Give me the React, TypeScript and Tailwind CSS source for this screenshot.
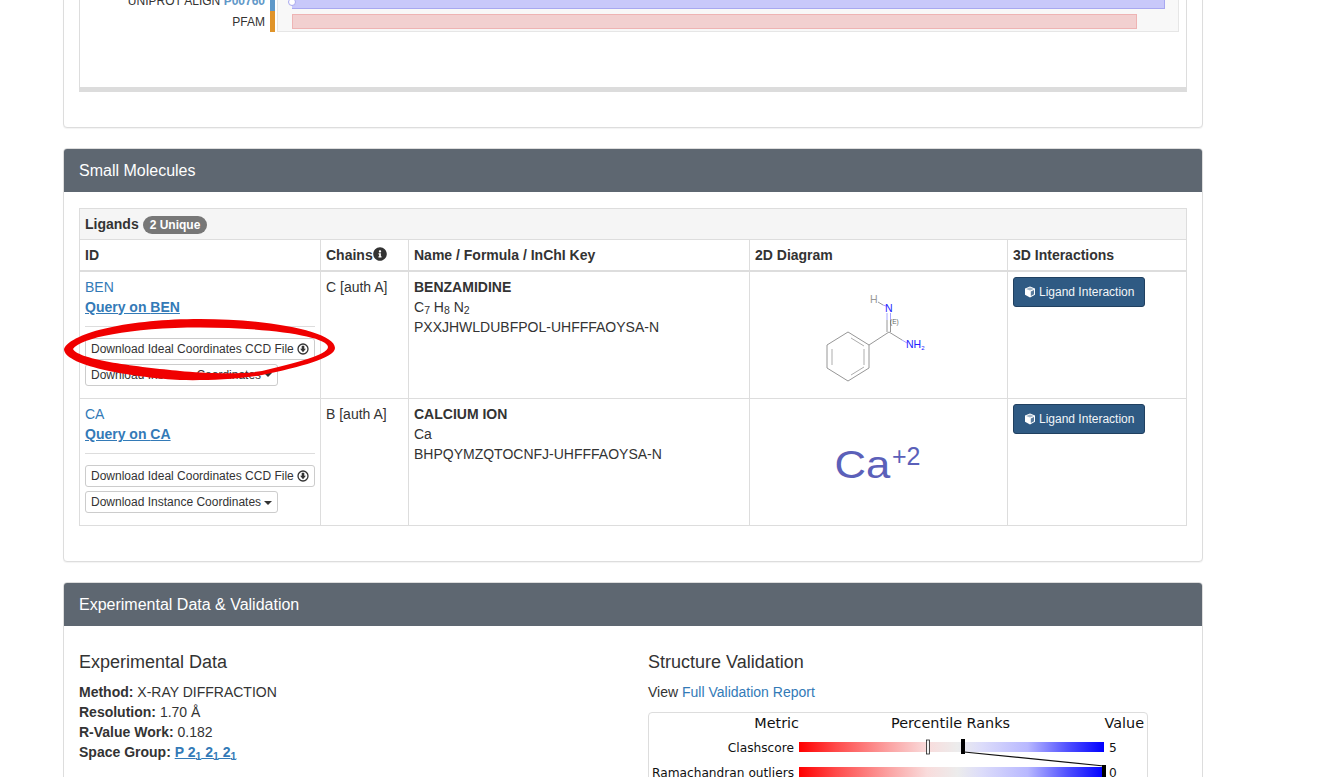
import { FaInfoCircle } from 'react-icons/fa';

const DownloadIcon = () => (
  <svg className="inline-block w-3 h-3 ml-[3px] align-[-2px]" viewBox="0 0 12 12">
    <circle cx="6" cy="6" r="5" fill="none" stroke="#333" strokeWidth="1.3" />
    <path d="M4.7 2.8h2.6v3h1.6L6 9.2 3.1 5.8h1.6z" fill="#333" />
  </svg>
);

const CubeIcon = () => (
  <svg className="inline-block w-3 h-3 mr-[3px] align-[-2px]" viewBox="0 0 12 12">
    <path d="M6 .5l5 1.9v6.4L6 11.5 1 8.8V2.4z" fill="#fff" />
    <path d="M2 3L6 4.6 10 3 6 1.5z" fill="#2f5a83" opacity="0.45" />
    <path d="M6.8 5.4L10 4v4.2L6.8 10z" fill="#2f5a83" opacity="0.8" />
  </svg>
);

const SmallButton = ({ children }: { children: React.ReactNode }) => (
  <button className="h-[22px] px-[5px] text-xs leading-[18px] text-[#333] bg-white border border-[#ccc] rounded-[3px] whitespace-nowrap">
    {children}
  </button>
);

const Caret = () => (
  <span className="inline-block ml-[3px] align-middle border-x-4 border-x-transparent border-t-4 border-t-[#333]" />
);

interface LigandRowProps {
  id: string;
  chains: string;
  name: string;
  formula: React.ReactNode;
  inchi: string;
  diagram: React.ReactNode;
}

function LigandRow({ id, chains, name, formula, inchi, diagram }: LigandRowProps) {
  return (
    <tr className="h-[128px] last:h-[127px]">
      <td className="border border-[#ddd] p-[5px] align-top">
        <a className="block text-[#337ab7]">{id}</a>
        <a className="block font-bold underline text-[#337ab7]">Query on {id}</a>
        <div className="border-t border-[#ddd] mt-[9px] mb-[11px]" />
        <div className="flex flex-col items-start gap-1">
          <SmallButton>
            Download Ideal Coordinates CCD File
            <DownloadIcon />
          </SmallButton>
          <SmallButton>
            Download Instance Coordinates
            <Caret />
          </SmallButton>
        </div>
      </td>
      <td className="border border-[#ddd] p-[5px] align-top">{chains}</td>
      <td className="border border-[#ddd] p-[5px] align-top">
        <div className="font-bold">{name}</div>
        <div>{formula}</div>
        <div>{inchi}</div>
      </td>
      <td className="border border-[#ddd] p-[5px] align-top">{diagram}</td>
      <td className="border border-[#ddd] p-[5px] align-top">
        <button className="h-[30px] px-[10px] text-xs text-[#f2f5f8] bg-[#2f5a83] border border-[#204060] rounded-[3px] whitespace-nowrap">
          <CubeIcon />
          Ligand Interaction
        </button>
      </td>
    </tr>
  );
}

const BenzamidineDiagram = () => (
  <svg className="block mx-auto mt-[13px]" width="120" height="100" viewBox="818 290 120 100">
    <g stroke="#8a8a8a" strokeWidth="0.9" fill="none">
      <path d="M847 332L868 345V368L847 381L826 368V345Z" />
      <path d="M850 338L863 346M863 349V365M850 375L863 367M831 349V365" strokeWidth="0.7" />
      <path d="M868 345L888 332" />
      <path d="M888 332L901 340" />
      <path d="M886 332V320M889.5 332V320" />
      <path d="M877 302L882 305" />
    </g>
    <g stroke="#9a9aff" strokeWidth="0.9" fill="none">
      <path d="M901 340L906 343" />
      <path d="M886 320V313M889.5 320V313" />
      <path d="M882 305L885 306" />
    </g>
    <g fontFamily="Liberation Sans, sans-serif">
      <text x="869" y="303" fontSize="10.5" fill="#999">H</text>
      <text x="884" y="312" fontSize="10.5" fill="#2222ff">N</text>
      <text x="905" y="348" fontSize="10.5" fill="#2222ff">NH<tspan fontSize="6" dy="2">2</tspan></text>
      <text x="889" y="323.5" fontSize="6.5" fill="#666">(E)</text>
    </g>
  </svg>
);

const CalciumDiagram = () => (
  <svg className="block mx-auto mt-[36px]" width="100" height="50" viewBox="829 440 100 50">
    <g fontFamily="Liberation Sans, sans-serif" fill="#5b60b9">
      <text transform="translate(834.5 477.5) scale(1.15 1)" fontSize="38">Ca</text>
      <text x="892" y="465" fontSize="25">+2</text>
    </g>
  </svg>
);

const ValidationChart = () => (
  <div className="w-[500px] h-[90px] border border-[#ddd] rounded">
    <svg className="block" width="498" height="88" viewBox="649 713 498 88">
      <defs>
        <linearGradient id="pct">
          <stop offset="0" stopColor="#ff0000" />
          <stop offset="0.12" stopColor="#ff4a4a" />
          <stop offset="0.3" stopColor="#fba5a5" />
          <stop offset="0.42" stopColor="#f9dcdc" />
          <stop offset="0.52" stopColor="#ececec" />
          <stop offset="0.6" stopColor="#dcdcfa" />
          <stop offset="0.75" stopColor="#b8b8ff" />
          <stop offset="0.88" stopColor="#5050ff" />
          <stop offset="1" stopColor="#0000ff" />
        </linearGradient>
      </defs>
      <g fontFamily="DejaVu Sans, sans-serif" fill="#111">
        <text x="799" y="728" fontSize="14.4" textAnchor="end">Metric</text>
        <text x="950.5" y="728" fontSize="14.4" textAnchor="middle">Percentile Ranks</text>
        <text x="1144" y="728" fontSize="14.4" textAnchor="end">Value</text>
        <text x="794" y="752" fontSize="12.2" textAnchor="end">Clashscore</text>
        <text x="794" y="777" fontSize="12.2" textAnchor="end">Ramachandran outliers</text>
        <text x="1109" y="752" fontSize="12.2">5</text>
        <text x="1109" y="777" fontSize="12.2">0</text>
      </g>
      <rect x="799" y="742" width="305" height="10" fill="url(#pct)" />
      <rect x="799" y="767" width="305" height="10" fill="url(#pct)" />
      <rect x="926.5" y="740" width="3" height="14" fill="#f4f4f4" stroke="#222" strokeWidth="0.8" />
      <rect x="961" y="739" width="4" height="15" fill="#000" />
      <path d="M964 752L1104 766" stroke="#111" strokeWidth="1.2" />
      <rect x="1102" y="765" width="4" height="15" fill="#000" />
    </svg>
  </div>
);

export default function App() {
  return (
    <div className="h-[777px] overflow-hidden bg-white text-sm leading-5 text-[#333] font-['Liberation_Sans',Arial,sans-serif]">
      <div className="ml-[63px] w-[1140px] -mt-[30px] flex flex-col gap-5">
        {/* Sequence panel */}
        <div className="border border-[#ddd] rounded bg-white pt-[15px] px-[15px] pb-[35px] shadow-[0_1px_1px_rgba(0,0,0,0.05)]">
          <div className="border-x border-[#ddd] border-b-[5px] border-b-[#dcdcdc] pt-1 pr-[7px] h-[106px]">
            <div className="flex h-[42px]">
              <div className="w-[185px] text-xs text-right">
                <div className="h-[21px] leading-[22px] whitespace-nowrap">
                  UNIPROT ALIGN <span className="font-bold text-[#5f98c8]">P00760</span>
                </div>
                <div className="h-[21px] leading-[22px]">PFAM</div>
              </div>
              <div className="w-[5px] ml-[5px] flex flex-col">
                <div className="h-[21px] bg-[#5f98c8]" />
                <div className="h-[21px] bg-[#e0942a]" />
              </div>
              <div className="flex-1 ml-[2px] border border-[#e6e6e6] bg-[#f8f8f8] pl-[14px] pr-[13px]">
                <div className="relative h-[18px] bg-[#c8c8fa] border-b border-r border-[#a8a8f0]">
                  <span className="absolute -left-[4px] top-[7px] w-[8px] h-[8px] rounded-full bg-white border border-[#a8a8f0]" />
                </div>
                <div className="h-[15px] mt-[5px] mr-[28px] bg-[#f2d0d0] border border-[#eeb4b4]" />
              </div>
            </div>
          </div>
        </div>

        {/* Small molecules panel */}
        <div className="relative border border-[#ddd] rounded bg-white pb-[35px] shadow-[0_1px_1px_rgba(0,0,0,0.05)]">
          <div className="h-[43px] px-[15px] flex items-center bg-[#5e6771] text-white text-base rounded-t-[3px]">
            Small Molecules
          </div>
          <div className="pt-4 px-[15px]">
            <table className="w-[1107px] table-fixed border-collapse">
              <colgroup>
                <col className="w-[241px]" />
                <col className="w-[88px]" />
                <col className="w-[341px]" />
                <col className="w-[258px]" />
                <col className="w-[179px]" />
              </colgroup>
              <thead>
                <tr className="h-[31px] bg-[#f5f5f5]">
                  <th colSpan={5} className="border border-[#ddd] px-[5px] text-left font-bold">
                    Ligands
                    <span className="inline-block ml-1 px-[7px] h-[18px] rounded-[10px] bg-[#777] text-white text-xs leading-[18px] align-[0px]">
                      2 Unique
                    </span>
                  </th>
                </tr>
                <tr className="h-[31px]">
                  <th className="border border-[#ddd] border-b-2 px-[5px] text-left font-bold">ID</th>
                  <th className="border border-[#ddd] border-b-2 px-[5px] text-left font-bold whitespace-nowrap">
                    Chains
                    <FaInfoCircle className="inline-block w-[14px] h-[14px] align-[-1px]" />
                  </th>
                  <th className="border border-[#ddd] border-b-2 px-[5px] text-left font-bold">Name / Formula / InChI Key</th>
                  <th className="border border-[#ddd] border-b-2 px-[5px] text-left font-bold">2D Diagram</th>
                  <th className="border border-[#ddd] border-b-2 px-[5px] text-left font-bold">3D Interactions</th>
                </tr>
              </thead>
              <tbody>
                <LigandRow
                  id="BEN"
                  chains="C [auth A]"
                  name="BENZAMIDINE"
                  formula={<>C<sub>7</sub> H<sub>8</sub> N<sub>2</sub></>}
                  inchi="PXXJHWLDUBFPOL-UHFFFAOYSA-N"
                  diagram={<BenzamidineDiagram />}
                />
                <LigandRow
                  id="CA"
                  chains="B [auth A]"
                  name="CALCIUM ION"
                  formula="Ca"
                  inchi="BHPQYMZQTOCNFJ-UHFFFAOYSA-N"
                  diagram={<CalciumDiagram />}
                />
              </tbody>
            </table>
          </div>

          {/* Hand-drawn annotation over the download button */}
          <svg className="absolute left-0 top-[170px] pointer-events-none" width="280" height="64" viewBox="64 319 280 64">
            <path
              fillRule="evenodd"
              fill="#f00000"
              d="M64 349C72 332 130 319 200 319C270 319 335 332 335 348C335 358 300 367 262 375C235 380 200 380.5 180 380C140 378 64 367 64 349ZM73 349C80 338 130 327.5 200 327.5C265 327.5 328 336 328 347C328 355 295 363 262 371C240 375 200 373 180 371C140 367 78 360 73 349Z"
            />
          </svg>
        </div>

        {/* Experimental data panel */}
        <div className="border border-[#ddd] rounded bg-white">
          <div className="h-[43px] px-[15px] flex items-center bg-[#5e6771] text-white text-base rounded-t-[3px]">
            Experimental Data &amp; Validation
          </div>
          <div className="pt-[26px] px-[15px] flex">
            <div className="w-[569px]">
              <h3 className="text-lg leading-5 mb-[10px]">Experimental Data</h3>
              <div><b>Method:</b> X-RAY DIFFRACTION</div>
              <div><b>Resolution:</b> 1.70 Å</div>
              <div><b>R-Value Work:</b> 0.182</div>
              <div>
                <b>Space Group:</b>{' '}
                <a className="font-bold underline text-[#337ab7]">P 2<sub>1</sub> 2<sub>1</sub> 2<sub>1</sub></a>
              </div>
              <div className="mt-3 font-bold">Unit Cell:</div>
            </div>
            <div>
              <h3 className="text-lg leading-5 mb-[10px]">Structure Validation</h3>
              <div>View <a className="text-[#337ab7]">Full Validation Report</a></div>
              <div className="mt-[10px]">
                <ValidationChart />
              </div>
            </div>
          </div>
        </div>
      </div>
    </div>
  );
}
